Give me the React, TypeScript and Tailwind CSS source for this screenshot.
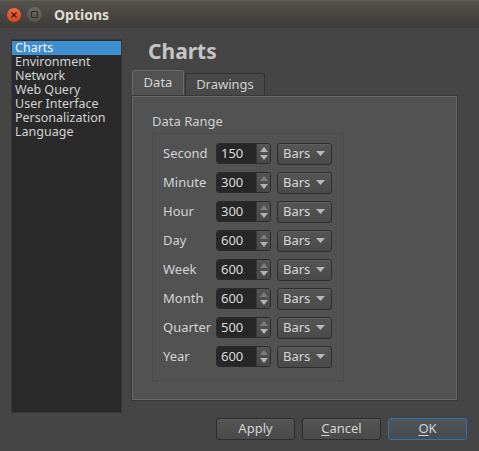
import React from "react";

const font = { fontFamily: "'Noto Sans', 'Open Sans', sans-serif" };

const pages = [
  "Charts",
  "Environment",
  "Network",
  "Web Query",
  "User Interface",
  "Personalization",
  "Language",
];

const ranges = [
  { label: "Second", value: 150, upOn: true },
  { label: "Minute", value: 300, upOn: false },
  { label: "Hour", value: 300, upOn: false },
  { label: "Day", value: 600, upOn: false },
  { label: "Week", value: 600, upOn: false },
  { label: "Month", value: 600, upOn: false },
  { label: "Quarter", value: 500, upOn: false },
  { label: "Year", value: 600, upOn: false },
];

function SpinBox({ value, upOn }: { value: number; upOn: boolean }) {
  return (
    <div className="flex h-[21px] w-[55px] overflow-hidden rounded-[3px] border border-[#2c2c2c]">
      <div className="flex flex-1 items-center bg-[#272727] pl-[4px] text-[13px] text-[#dcdcdc]">
        {value}
      </div>
      <div className="flex w-[14px] flex-col items-center justify-center gap-[3px] border-l border-[#3a3a3a] bg-gradient-to-b from-[#555555] to-[#484848]">
        <svg width="8" height="5" viewBox="0 0 8 5">
          <path d="M0 5 L4 0 L8 5 Z" fill={upOn ? "#b4b4b4" : "#7c7c7c"} />
        </svg>
        <svg width="8" height="5" viewBox="0 0 8 5">
          <path d="M0 0 L8 0 L4 5 Z" fill="#b4b4b4" />
        </svg>
      </div>
    </div>
  );
}

function Combo() {
  return (
    <div className="flex h-[22px] w-[55px] items-center justify-between rounded-[3px] border border-[#2e2e2e] bg-gradient-to-b from-[#555555] to-[#4a4a4a] pl-[5px] pr-[6px] text-[13px] text-[#d6d6d6] shadow-[inset_0_1px_0_#606060]">
      <span>Bars</span>
      <svg width="9" height="5" viewBox="0 0 9 5">
        <path d="M0 0 L9 0 L4.5 5 Z" fill="#b8b8b8" />
      </svg>
    </div>
  );
}

function Button({
  children,
  primary,
}: {
  children: React.ReactNode;
  primary?: boolean;
}) {
  return (
    <div
      className={
        "flex h-[22px] w-[79px] items-center justify-center rounded-[3px] border text-[13px] text-[#d4d4d4] " +
        (primary
          ? "border-[#2f75ab] bg-gradient-to-b from-[#515559] to-[#474b4f]"
          : "border-[#2d2d2d] bg-gradient-to-b from-[#555555] to-[#4a4a4a] shadow-[inset_0_1px_0_#5e5e5e]")
      }
    >
      {children}
    </div>
  );
}

export default function App() {
  return (
    <div
      className="flex h-[451px] w-[479px] flex-col overflow-hidden bg-[#454545]"
      style={font}
    >
      {/* Title bar */}
      <div className="flex h-[28px] items-center border-t border-[#5e5a54] bg-gradient-to-b from-[#55514b] to-[#3e3c38] pl-[7px]">
        <div className="flex h-[14px] w-[14px] items-center justify-center rounded-full bg-gradient-to-b from-[#f06a3f] to-[#d8461c]">
          <svg width="6" height="6" viewBox="0 0 6 6">
            <path d="M0.5 0.5 L5.5 5.5 M5.5 0.5 L0.5 5.5" stroke="#3a1a10" strokeWidth="1.3" />
          </svg>
        </div>
        <div className="ml-[6px] flex h-[15px] w-[15px] items-center justify-center rounded-full bg-gradient-to-b from-[#6a6862] to-[#55534e]">
          <div className="h-[7px] w-[7px] rounded-[1px] border border-[#2e2d2a]" />
        </div>
        <span className="ml-[12px] text-[14px] font-bold text-[#dfdbd2]">Options</span>
      </div>

      {/* Body */}
      <div className="flex px-[11px] pt-[11px]">
        <div className="h-[374px] w-[111px] border border-[#383838] bg-[#2a2a2a] pt-[1px]">
          {pages.map((p, i) => (
            <div
              key={p}
              className={
                "h-[14px] pl-[3px] text-[12.5px] leading-[14px] " +
                (i === 0 ? "bg-[#3e8ed0] text-[#f4f4f4]" : "text-[#d2d2d2]")
              }
            >
              {p}
            </div>
          ))}
        </div>

        <div className="ml-[9px] flex w-[327px] flex-col">
          <div className="h-[32px] pl-[17px] text-[21px] font-bold leading-[24px] text-[#c4c4c4]">
            Charts
          </div>
          <div className="flex h-[24px] items-end pl-[1px]">
            <div className="flex h-[25px] w-[52px] items-center justify-center rounded-t-[3px] border border-b-0 border-[#6a6a6a] bg-[#525252] text-[13px] text-[#d6d6d6]">
              Data
            </div>
            <div className="ml-[1px] flex h-[22px] w-[80px] items-center justify-center rounded-t-[3px] border border-b-0 border-[#333333] bg-[#484848] text-[13px] text-[#cfcfcf]">
              Drawings
            </div>
          </div>
          <div className="h-[306px] border border-[#383838]">
            <div className="h-full border border-[#676767] bg-[#525252] pl-[19px] pt-[16px]">
              <div className="text-[13px] leading-[16px] text-[#cfcfcf]">Data Range</div>
              <div className="mt-[4px] flex h-[248px] w-[192px] flex-col gap-[8px] border border-[#4a4a4a] pl-[10px] pt-[9px]">
                {ranges.map((r) => (
                  <div key={r.label} className="flex h-[21px] items-center">
                    <span className="w-[53px] text-[13px] text-[#d2d2d2]">{r.label}</span>
                    <SpinBox value={r.value} upOn={r.upOn} />
                    <div className="ml-[6px]">
                      <Combo />
                    </div>
                  </div>
                ))}
              </div>
            </div>
          </div>
        </div>
      </div>

      {/* Buttons */}
      <div className="mt-[5px] flex justify-end gap-[7px] pr-[12px]">
        <Button>Apply</Button>
        <Button>
          <span>
            <span className="underline underline-offset-2">C</span>ancel
          </span>
        </Button>
        <Button primary>
          <span>
            <span className="underline underline-offset-2">O</span>K
          </span>
        </Button>
      </div>
    </div>
  );
}
